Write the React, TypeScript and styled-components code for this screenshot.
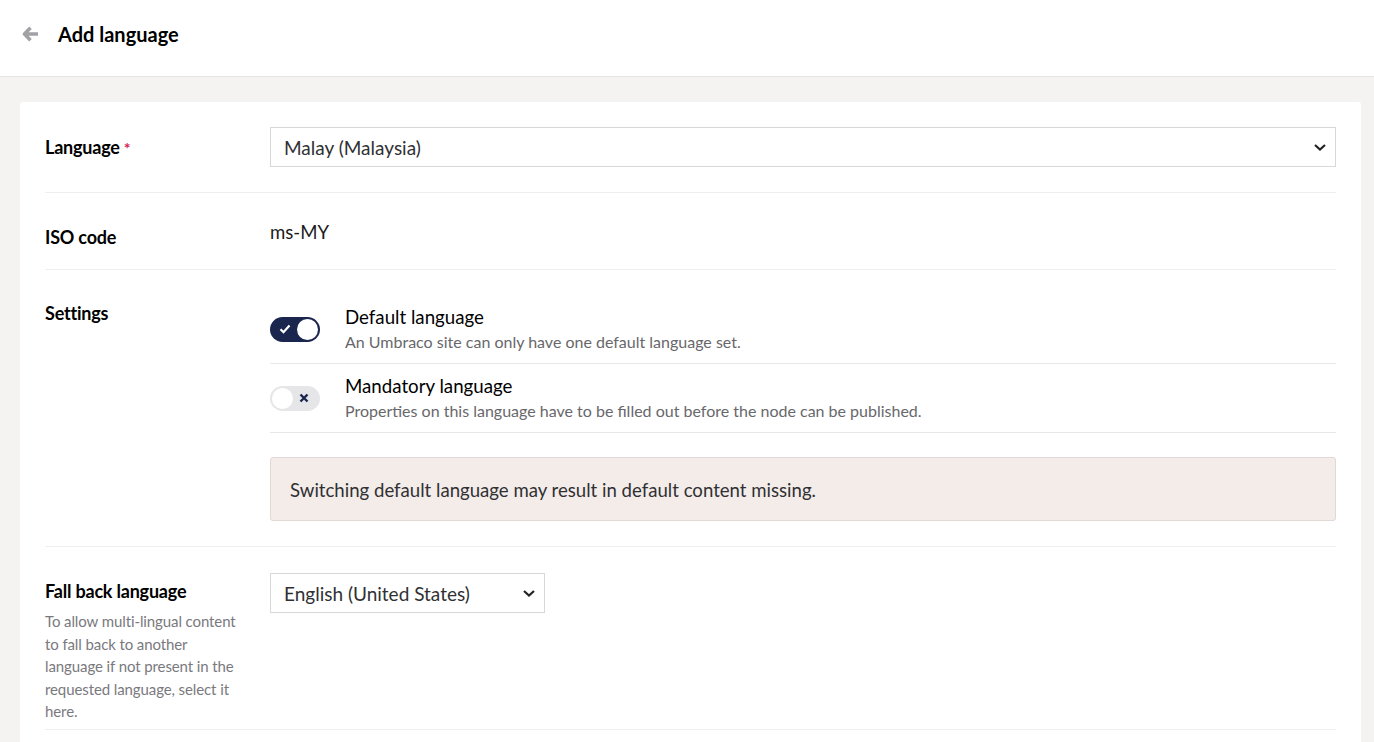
import React from "react";
import styled, { createGlobalStyle } from "styled-components";

const GlobalStyle = createGlobalStyle`
  html, body { margin: 0; padding: 0; }
  body {
    font-family: Lato, "Noto Sans", sans-serif;
    background: #f4f3f2;
    color: #1b1b1b;
  }
  * { box-sizing: border-box; }
`;

const Page = styled.div`
  min-height: 742px;
  background: #f4f3f2;
`;

const Header = styled.header`
  height: 77px;
  background: #fff;
  border-bottom: 1px solid #e6e5e4;
  display: flex;
  align-items: center;
  padding: 0 0 8px 21px;
  gap: 19px;
`;

const BackButton = styled.button`
  border: 0;
  background: none;
  padding: 0;
  width: 18px;
  height: 18px;
  display: flex;
  align-items: center;
  justify-content: center;
  color: #a2a1a6;
  cursor: pointer;
`;

const Title = styled.h1`
  margin: 0;
  font-size: 20px;
  font-weight: 700;
  color: #000;
`;

const Main = styled.main`
  padding: 25px 13px 0 20px;
`;

const Card = styled.section`
  background: #fff;
  border-radius: 3px;
  padding: 0 25px 40px;
  box-shadow: 0 1px 1px rgba(0, 0, 0, 0.03);
`;

const Row = styled.div<{ $pad: string }>`
  display: grid;
  grid-template-columns: 225px 1fr;
  padding: ${(p) => p.$pad};
  border-bottom: 1px solid #efeeed;
`;

const LabelCol = styled.div`
  display: flex;
  flex-direction: column;
`;

const Label = styled.label<{ $top?: number }>`
  font-size: 18px;
  line-height: 22px;
  font-weight: 700;
  color: #000;
  letter-spacing: -0.2px;
  margin-top: ${(p) => p.$top ?? 0}px;
`;

const Required = styled.span`
  color: #d42054;
  margin-left: 4px;
  font-size: 16px;
`;

const LabelHelp = styled.div`
  margin-top: 8px;
  width: 196px;
  font-size: 15px;
  letter-spacing: -0.1px;
  line-height: 22.6px;
  color: #7a797e;
`;

const Select = styled.select<{ $width?: number }>`
  appearance: none;
  -webkit-appearance: none;
  width: ${(p) => (p.$width ? `${p.$width}px` : "100%")};
  height: 40px;
  border: 1px solid #d8d7d9;
  border-radius: 0;
  background: #fff
    url("data:image/svg+xml;utf8,<svg xmlns='http://www.w3.org/2000/svg' width='14' height='10' viewBox='0 0 14 10'><path d='M2 3 L7 7.5 L12 3' fill='none' stroke='%23222' stroke-width='2.2'/></svg>")
    no-repeat right 8px center;
  padding: 0 30px 0 13px;
  font-family: Lato, "Noto Sans", sans-serif;
  font-size: 19px;
  color: #303033;
`;

const Value = styled.div`
  font-size: 18.6px;
  line-height: 22px;
  color: #1b1b1b;
`;

const SettingsList = styled.div`
  display: flex;
  flex-direction: column;
`;

const Setting = styled.div`
  display: flex;
  align-items: center;
  gap: 25px;
  padding: 9px 0;
  border-bottom: 1px solid #e9e8e7;
`;

const Toggle = styled.span<{ $on: boolean }>`
  position: relative;
  flex: none;
  width: 50px;
  height: 25px;
  border-radius: 13px;
  background: ${(p) => (p.$on ? "#1b264f" : "#e6e6e8")};
  display: flex;
  align-items: center;
  justify-content: ${(p) => (p.$on ? "flex-start" : "flex-end")};
  padding-left: ${(p) => (p.$on ? "9px" : "0")};
  padding-right: ${(p) => (p.$on ? "0" : "11px")};
`;

const Knob = styled.span<{ $on: boolean }>`
  position: absolute;
  top: 2px;
  left: ${(p) => (p.$on ? "27px" : "2px")};
  width: 21px;
  height: 21px;
  border-radius: 50%;
  background: #fff;
`;

const SettingText = styled.div`
  display: flex;
  flex-direction: column;
`;

const SettingTitle = styled.div`
  font-size: 18.7px;
  color: #000;
  line-height: 26px;
`;

const SettingDesc = styled.div`
  font-size: 16px;
  color: #68676b;
  line-height: 24px;
`;

const Alert = styled.div`
  margin-top: 24px;
  background: #f3ece9;
  border: 1px solid #e2d8d5;
  border-radius: 3px;
  height: 64px;
  display: flex;
  align-items: center;
  padding: 2px 19px 0;
  font-size: 18.6px;
  color: #303033;
`;

const CheckIcon = () => (
  <svg width="12" height="10" viewBox="0 0 12 10">
    <path d="M1.5 5.2 L4.5 8.2 L10.5 1.5" fill="none" stroke="#fff" strokeWidth="2.2" />
  </svg>
);

const CrossIcon = () => (
  <svg width="10" height="10" viewBox="0 0 10 10">
    <path d="M1.5 1.5 L8.5 8.5 M8.5 1.5 L1.5 8.5" fill="none" stroke="#1b264f" strokeWidth="2.4" />
  </svg>
);

const ArrowLeft = () => (
  <svg width="17" height="16" viewBox="0 0 17 16">
    <path d="M8.5 1.8 L2.5 8 L8.5 14.2 M3 8 H16" fill="none" stroke="currentColor" strokeWidth="3.6" strokeLinejoin="round" />
  </svg>
);

export default function App() {
  return (
    <Page>
      <GlobalStyle />
      <Header>
        <BackButton aria-label="Back">
          <ArrowLeft />
        </BackButton>
        <Title>Add language</Title>
      </Header>
      <Main>
        <Card>
          <Row $pad="25px 0 25px">
            <LabelCol>
              <Label $top={9}>
                Language<Required>*</Required>
              </Label>
            </LabelCol>
            <Select defaultValue="ms-MY">
              <option value="ms-MY">Malay (Malaysia)</option>
            </Select>
          </Row>
          <Row $pad="28px 0 21px">
            <LabelCol>
              <Label $top={5}>ISO code</Label>
            </LabelCol>
            <Value>ms-MY</Value>
          </Row>
          <Row $pad="25px 0 25px">
            <LabelCol>
              <Label $top={7}>Settings</Label>
            </LabelCol>
            <SettingsList>
              <Setting>
                <Toggle $on={true}>
                  <CheckIcon />
                  <Knob $on={true} />
                </Toggle>
                <SettingText>
                  <SettingTitle>Default language</SettingTitle>
                  <SettingDesc>An Umbraco site can only have one default language set.</SettingDesc>
                </SettingText>
              </Setting>
              <Setting>
                <Toggle $on={false}>
                  <CrossIcon />
                  <Knob $on={false} />
                </Toggle>
                <SettingText>
                  <SettingTitle>Mandatory language</SettingTitle>
                  <SettingDesc>
                    Properties on this language have to be filled out before the node can be published.
                  </SettingDesc>
                </SettingText>
              </Setting>
              <Alert>Switching default language may result in default content missing.</Alert>
            </SettingsList>
          </Row>
          <Row $pad="26px 0 6px">
            <LabelCol>
              <Label $top={7}>Fall back language</Label>
              <LabelHelp>
                To allow multi-lingual content to fall back to another language if not present in the
                requested language, select it here.
              </LabelHelp>
            </LabelCol>
            <Select $width={275} defaultValue="en-US">
              <option value="en-US">English (United States)</option>
            </Select>
          </Row>
        </Card>
      </Main>
    </Page>
  );
}
